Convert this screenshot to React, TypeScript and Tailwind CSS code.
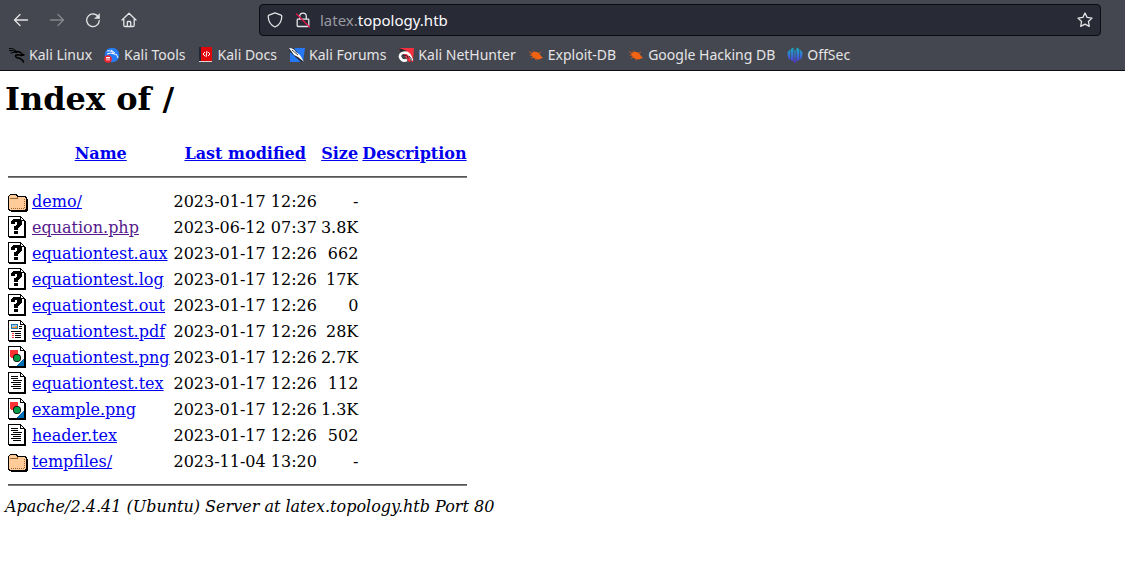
import React from 'react';

type IconKind = 'folder' | 'unknown' | 'layout' | 'image' | 'text';

type Entry = {
  name: string;
  modified: string;
  size: string;
  icon: IconKind;
  visited?: boolean;
};

const entries: Entry[] = [
  { name: 'demo/', modified: '2023-01-17 12:26', size: '-', icon: 'folder' },
  { name: 'equation.php', modified: '2023-06-12 07:37', size: '3.8K', icon: 'unknown', visited: true },
  { name: 'equationtest.aux', modified: '2023-01-17 12:26', size: '662', icon: 'unknown' },
  { name: 'equationtest.log', modified: '2023-01-17 12:26', size: '17K', icon: 'unknown' },
  { name: 'equationtest.out', modified: '2023-01-17 12:26', size: '0', icon: 'unknown' },
  { name: 'equationtest.pdf', modified: '2023-01-17 12:26', size: '28K', icon: 'layout' },
  { name: 'equationtest.png', modified: '2023-01-17 12:26', size: '2.7K', icon: 'image' },
  { name: 'equationtest.tex', modified: '2023-01-17 12:26', size: '112', icon: 'text' },
  { name: 'example.png', modified: '2023-01-17 12:26', size: '1.3K', icon: 'image' },
  { name: 'header.tex', modified: '2023-01-17 12:26', size: '502', icon: 'text' },
  { name: 'tempfiles/', modified: '2023-11-04 13:20', size: '-', icon: 'folder' },
];

/* Horizontal pixel runs: x, y, width, height */
type Run = [number, number, number, number];

function Runs({ runs, fill = '#000' }: { runs: Run[]; fill?: string }) {
  return (
    <g fill={fill}>
      {runs.map(([x, y, w, h], i) => (
        <rect key={i} x={x} y={y} width={w} height={h} />
      ))}
    </g>
  );
}

const questionRuns: Run[] = [
  [5, 3, 7, 1], [4, 4, 9, 1], [3, 5, 11, 1], [3, 6, 4, 2], [9, 6, 5, 2], [9, 8, 5, 1],
  [8, 9, 5, 1], [6, 10, 6, 1], [6, 11, 5, 1], [6, 12, 4, 2], [6, 15, 4, 3],
];

const textRuns: Run[] = [
  [3, 4, 7, 1], [3, 6, 7, 1], [5, 8, 9, 1], [3, 10, 10, 1],
  [5, 12, 8, 1], [3, 14, 10, 1], [5, 16, 8, 1],
];

function Page({ children }: { children: React.ReactNode }) {
  return (
    <>
      <path d="M0 0h13v1h1v1h1v1h1v1h1v1h1v17H1v-1H0z" fill="#000" />
      <path d="M1 1h11v4h4v15H1z" fill="#fff" />
      <path d="M13 2h1v1h1v1h-2z" fill="#fff" />
      {children}
    </>
  );
}

function FileIcon({ kind }: { kind: IconKind }) {
  return (
    <svg width="20" height="22" viewBox="0 0 20 22" shapeRendering="crispEdges" className="block" aria-hidden="true">
      {kind === 'folder' && (
        <>
          <path d="M2 4h7v1h1v1h8v1h1v2h1v12h-1v1H3v-1H1v-1H0V6h1V5h1z" fill="#000" />
          <path d="M2 5h6v1h1v1h8v1h1v11h-1v1H2v-1H1V6h1z" fill="#ffcc99" />
          <path d="M2 8h7V7h1" fill="none" stroke="#996633" />
          <path d="M3 18.5h14" stroke="#996633" strokeDasharray="1 1" />
          <path d="M16.5 9v9" stroke="#996633" strokeDasharray="1 1" />
        </>
      )}
      {kind === 'unknown' && (
        <Page>
          <Runs runs={questionRuns} />
        </Page>
      )}
      {kind === 'text' && (
        <Page>
          <Runs runs={textRuns} />
        </Page>
      )}
      {kind === 'layout' && (
        <Page>
          <Runs fill="#1f78b4" runs={[[3, 4, 7, 5]]} />
          <Runs fill="#99ccff" runs={[[4, 5, 5, 2]]} />
          <Runs fill="#ff9933" runs={[[4, 7, 5, 1], [7, 6, 2, 1]]} />
          <Runs runs={[[11, 8, 3, 1], [11, 6, 3, 1], [3, 11, 10, 1], [7, 13, 6, 1], [7, 15, 6, 1], [7, 17, 6, 1]]} />
          <Runs fill="#ff3333" runs={[[4, 13, 2, 1], [4, 15, 2, 1], [4, 17, 2, 1]]} />
        </Page>
      )}
      {kind === 'image' && (
        <Page>
          <path d="M2 4h8v8H3v-1H2z" fill="#ff3333" />
          <path d="M16 13v7H8z" fill="#0070b8" />
          <circle cx="9" cy="12" r="4" fill="#000" shapeRendering="auto" />
          <circle cx="9" cy="12" r="3.2" fill="#009944" shapeRendering="auto" />
        </Page>
      )}
    </svg>
  );
}

const dragon = (
  <g fill="none" stroke="black" strokeLinecap="round" strokeLinejoin="round">
    <path d="M.5 1.5Q5 1 7.500 4.500M.5 3.500Q4 2.800 7 5M2 6q3-1.500 6-.5" strokeWidth="1" />
    <path d="M7 4.500C10 4.500 12 5 12.500 7L15 8l-3 .5C8 7 5.500 8 7 10c1.500 1.500 6 .5 7.500 5" strokeWidth="1.5" />
  </g>
);

const bug = (
  <>
    <path d="M3 6.500Q6 3.500 10 5.500q2 1 3 3.500l2 2-2 .5Q11 13 8 12 4.500 11 3 6.500" fill="#f26313" />
    <path d="M1 4.500l4 2.500M5 3.500l2 2M1.500 8l3 .5M3 11l3-1M7.500 12l1 1.500M11 6l2-1" stroke="#e95d12" strokeWidth=".8" fill="none" />
  </>
);

const bookmarks: { label: string; icon: React.ReactNode }[] = [
  { label: 'Kali Linux', icon: dragon },
  {
    label: 'Kali Tools',
    icon: (
      <>
        <circle cx="8" cy="8" r="7.300" fill="#267bf4" />
        <path d="M3 4q5-1 7 3 3-1 4 4M3 7q4-2 7 0M7 3l4 3" stroke="#fff" strokeWidth="1" fill="none" />
        <circle cx="4" cy="12" r="3.800" fill="#ed2530" />
        <path d="M2 10.500h4M3 10.500v3M5 10.500v3" stroke="#fff" fill="none" />
      </>
    ),
  },
  {
    label: 'Kali Docs',
    icon: (
      <>
        <path d="M1 0h13v15H1z" fill="#df0709" />
        <path d="M1 0h2v14H1z" fill="#222936" />
        <path d="M1 14.500h13" stroke="#e7cfd2" />
        <path d="M7 5L5 7l2 2M10 5l2 2-2 2M9 4L8 10" stroke="#fff" fill="none" />
      </>
    ),
  },
  {
    label: 'Kali Forums',
    icon: (
      <>
        <path d="M1 1h15l-2 14H1z" fill="#2678f2" />
        <path d="M0 1h5l10 14h-3L1 5z" fill="#222936" />
        <path d="M0 1q5 0 7 4l4 3 4 7-6-5-4-2z" fill="#fff" />
        <path d="M3 3l6 5" stroke="#444b58" />
      </>
    ),
  },
  {
    label: 'Kali NetHunter',
    icon: (
      <>
        <path d="M1 1h15l-1 14h-4z" fill="#f5303e" />
        <path d="M1 1l8 3-5 4z" fill="#242831" />
        <path d="M14 13.500Q12 5.500 7 5.500 1.500 6 2 10q2 5 7 3" fill="none" stroke="#fff" strokeWidth="2.600" />
        <path d="M5 8.500q5-1 5 3M11 9q3 2 2 6" fill="none" stroke="#292d35" strokeWidth="1" />
      </>
    ),
  },
  { label: 'Exploit-DB', icon: bug },
  { label: 'Google Hacking DB', icon: bug },
  {
    label: 'OffSec',
    icon: (
      <>
        <defs>
          <linearGradient id="offsec" gradientUnits="userSpaceOnUse" x1="0" y1="0" x2="0" y2="16">
            <stop stopColor="#13b7c6" />
            <stop offset="1" stopColor="#5631de" />
          </linearGradient>
        </defs>
        <path
          d="M6.500 .5v14L3.800 13V2zM7.300 3h1.400v13H7.300zM9.500 .5v14l2.700-1.500V2zM3.200 2.500v10.500Q.5 11 .5 7.500T3.200 2.500M12.800 2.500v10.500q2.700-2 2.700-5.500t-2.700-5"
          fill="url(#offsec)"
        />
      </>
    ),
  },
];

function NavIcon({ children }: { children: React.ReactNode }) {
  return (
    <svg
      width="16" height="16" viewBox="0 0 16 16" fill="none" stroke="currentColor"
      strokeWidth="1.3" strokeLinecap="round" strokeLinejoin="round" aria-hidden="true"
    >
      {children}
    </svg>
  );
}

function Toolbar() {
  return (
    <header className="border-b border-[#0c0c12] bg-[#44474f] font-['Noto_Sans',sans-serif] text-[14px] leading-5 text-[#e4e4e6]">
      <div className="flex h-[39px] items-center pr-6 pl-[13px]">
        <nav className="flex w-[246px] shrink-0 gap-5" aria-label="Navigation">
          <button type="button" aria-label="Back">
            <NavIcon><path d="M1.500 8h13M7 2.500L1.500 8 7 13.500" /></NavIcon>
          </button>
          <button type="button" aria-label="Forward" className="text-[#86888d]">
            <NavIcon><path d="M1.500 8h13M9 2.500L14.500 8 9 13.500" /></NavIcon>
          </button>
          <button type="button" aria-label="Reload">
            <NavIcon>
              <path d="M13.500 5.200A6.300 6.300 0 1 0 14.300 8.500" />
              <path d="M14.500 2v4.500H10z" fill="currentColor" strokeWidth=".6" />
            </NavIcon>
          </button>
          <button type="button" aria-label="Home">
            <NavIcon>
              <path d="M1 8l7-6.700L15 8M2.800 7v6.200q0 1.300 1.300 1.300h7.800q1.300 0 1.300-1.300V7M6.300 14.300v-4q0-.8.8-.8h1.800q.8 0 .8.8v4" />
            </NavIcon>
          </button>
        </nav>
        <div className="flex h-8 flex-1 items-center rounded border border-[#0c0c12] bg-[#282a36] px-[7px]">
          <button type="button" aria-label="Tracking protection">
            <NavIcon><path d="M8 .9l6 2.200c.7.300.8.700.8 1.200C14.700 9 12 13.300 8 15 4 13.300 1.300 9 1.200 4.300c0-.5.1-.9.8-1.200z" /></NavIcon>
          </button>
          <button type="button" aria-label="Connection is not secure" className="ml-3">
            <NavIcon>
              <path d="M4.700 7V4.500a3.300 3.300 0 0 1 6.600 0V7M3 7.200h10q.8 0 .8.800v5.700q0 .8-.8.800H3q-.8 0-.8-.8V8q0-.8.8-.8z" />
              <path d="M1.500 2l13 13" stroke="#e4184c" />
            </NavIcon>
          </button>
          <div
            role="textbox"
            aria-label="Address"
            contentEditable
            suppressContentEditableWarning
            className="ml-[9px] flex-1 text-[15px] text-[#fbfbfe] outline-none"
          >
            <span className="text-[#999aa0]">latex.</span>topology.htb
          </div>
          <button type="button" aria-label="Bookmark this page">
            <NavIcon><path d="M8 1l2.100 4.400 4.900.7-3.600 3.400.9 4.900L8 12.100l-4.300 2.300.9-4.900L1 6.100l4.900-.7z" /></NavIcon>
          </button>
        </div>
      </div>
      <nav className="flex h-[31px] items-center gap-3 pl-[9px] whitespace-nowrap" aria-label="Bookmarks">
        {bookmarks.map((b) => (
          <a key={b.label} href="#" className="flex items-center gap-1">
            <svg width="16" height="16" viewBox="0 0 16 16" aria-hidden="true">{b.icon}</svg>
            {b.label}
          </a>
        ))}
      </nav>
    </header>
  );
}

function Rule() {
  return (
    <tr>
      <th colSpan={5}>
        <hr className="my-2 border-t border-b border-t-[#555] border-b-[#808080]" />
      </th>
    </tr>
  );
}

export default function App() {
  return (
    <div className="min-h-screen bg-white">
      <Toolbar />
      <main className="px-[5px] pt-[10px] font-['DejaVu_Serif',serif] text-[16px] leading-[19px] text-black">
        <h1 className="mb-[21px] text-[32px] leading-[37px] font-bold">Index of /</h1>
        <table className="border-separate border-spacing-[2px] whitespace-nowrap [&_td]:p-px [&_th]:p-px">
          <thead>
            <tr>
              <th><div className="h-[22px] w-5" /></th>
              {['Name', 'Last modified', 'Size', 'Description'].map((h) => (
                <th key={h}><a href="#" className="text-[#0000ee] underline">{h}</a></th>
              ))}
            </tr>
          </thead>
          <tbody>
            <Rule />
            {entries.map((e) => (
              <tr key={e.name}>
                <td><FileIcon kind={e.icon} /></td>
                <td>
                  <a href="#" className={e.visited ? 'text-[#551a8b] underline' : 'text-[#0000ee] underline'}>{e.name}</a>
                </td>
                <td className="text-right">{e.modified}</td>
                <td className="text-right">{e.size}</td>
                <td />
              </tr>
            ))}
            <Rule />
          </tbody>
        </table>
        <address className="italic">Apache/2.4.41 (Ubuntu) Server at latex.topology.htb Port 80</address>
      </main>
    </div>
  );
}
